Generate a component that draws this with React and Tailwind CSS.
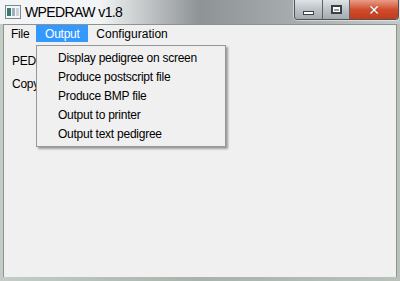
import React from 'react';

const menuItems = [
  'Display pedigree on screen',
  'Produce postscript file',
  'Produce BMP file',
  'Output to printer',
  'Output text pedigree',
];

const AppIcon = () => (
  <svg width="16" height="14" viewBox="0 0 16 14">
    <rect x="0.5" y="0.5" width="15" height="13" fill="#f4f6f8" stroke="#7a8894" />
    <rect x="2" y="3" width="4" height="8" fill="#3a7a6a" />
    <rect x="7" y="3" width="3" height="8" fill="#9ab0c0" />
    <rect x="11" y="3" width="3" height="8" fill="#c8d4dc" />
  </svg>
);

const CaptionButtons = () => (
  <div className="flex h-[20px] self-start rounded-b-[4px] border border-t-0 border-[#4e5358] overflow-hidden shadow-[0_0_0_1px_rgba(255,255,255,0.5)]">
    <div className="w-[28px] flex items-center justify-center bg-gradient-to-b from-[#dfe3e6] via-[#bcc3c8] to-[#a3abb1] border-r border-[#5e6368]">
      <div className="w-[11px] h-[4px] bg-white border border-[#3a3f44] mt-[6px]" />
    </div>
    <div className="w-[27px] flex items-center justify-center bg-gradient-to-b from-[#dfe3e6] via-[#bcc3c8] to-[#a3abb1] border-r border-[#5e6368]">
      <div className="w-[11px] h-[9px] border-2 border-[#3a3f44] bg-white flex items-center justify-center">
        <div className="w-[5px] h-[2px] bg-[#9ca3a8]" />
      </div>
    </div>
    <div className="w-[48px] flex items-center justify-center bg-gradient-to-b from-[#e79d87] via-[#d04d2d] to-[#c13b1c]">
      <span className="text-white font-bold text-[14px] leading-none [font-family:'DejaVu_Sans',sans-serif] [text-shadow:0_0_1px_#5a1a0a]">
        ✕
      </span>
    </div>
  </div>
);

const App = () => {
  return (
    <div className="w-[400px] h-[281px] flex flex-col bg-gradient-to-r from-[#c4ccc6] via-[#a8b4ab] to-[#b8c2bb] [font-family:'Liberation_Sans',Arial,sans-serif] overflow-hidden">
      {/* title bar */}
      <div className="h-[24px] flex items-start bg-gradient-to-r from-[#f2f4f5] from-25% via-[#8e9395] via-50% to-[#c4cacc] pl-[5px] pr-[1px] shrink-0">
        <div className="flex items-center gap-[4px] h-[24px]">
          <AppIcon />
          <span className="text-[14px] tracking-[-0.6px] text-black leading-none">WPEDRAW v1.8</span>
        </div>
        <div className="flex-1" />
        <CaptionButtons />
      </div>

      {/* client area */}
      <div className="relative flex-1 mx-[3px] mb-[4px] bg-[#f0f0f0] border border-[#8c9490] border-b-0 flex flex-col text-[12px] tracking-[-0.25px] text-black">
        <div className="flex h-[17px] items-stretch">
          <div className="px-[7px] flex items-center">File</div>
          <div className="flex items-center bg-[#3399ff] text-white w-[52px] justify-center">Output</div>
          <div className="px-[8px] flex items-center tracking-normal">Configuration</div>
        </div>
        <div className="pl-[8px] pt-[10px] flex flex-col gap-[5px]">
          <div>PEDRAW</div>
          <div>Copyright</div>
        </div>

        {/* dropdown */}
        <div className="absolute left-[32px] top-[20px] w-[190px] bg-[#f0f0f0] border border-[#979797] shadow-[2px_2px_2px_rgba(0,0,0,0.35)] pt-[2px] pb-[3px]">
          {menuItems.map((item) => (
            <div key={item} className="h-[19px] flex items-center pl-[21px]">
              {item}
            </div>
          ))}
        </div>
      </div>
    </div>
  );
};

export default App;
